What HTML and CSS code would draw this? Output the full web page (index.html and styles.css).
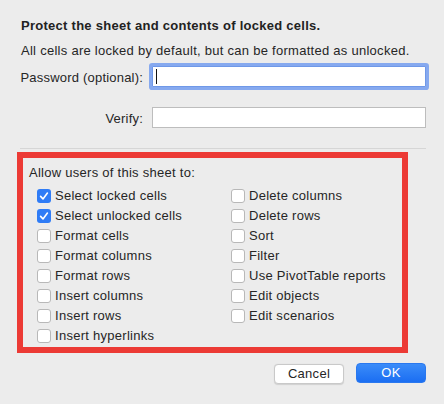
FILE: index.html
```html
<!DOCTYPE html>
<html>
<head>
<meta charset="utf-8">
<link rel="stylesheet" href="styles.css">
</head>
<body>
<div class="dialog">
  <div class="title">Protect the sheet and contents of locked cells.</div>
  <div class="desc">All cells are locked by default, but can be formatted as unlocked.</div>
  <div class="field field-password">
    <label class="field-label">Password (optional):</label>
    <div class="input input-focus"><span class="caret"></span></div>
  </div>
  <div class="field field-verify">
    <label class="field-label">Verify:</label>
    <div class="input"></div>
  </div>
  <div class="separator"></div>
  <div class="allow-box">
    <div class="allow-title">Allow users of this sheet to:</div>
    <div class="options">
      <div class="col">
        <div class="opt"><span class="cb checked"><svg viewBox="0 0 14 14" width="14" height="14"><path d="M3.6 7.4 L6 9.9 L10.4 4.1" fill="none" stroke="#fff" stroke-width="1.6" stroke-linecap="round" stroke-linejoin="round"/></svg></span><span>Select locked cells</span></div>
        <div class="opt"><span class="cb checked"><svg viewBox="0 0 14 14" width="14" height="14"><path d="M3.6 7.4 L6 9.9 L10.4 4.1" fill="none" stroke="#fff" stroke-width="1.6" stroke-linecap="round" stroke-linejoin="round"/></svg></span><span>Select unlocked cells</span></div>
        <div class="opt"><span class="cb"></span><span>Format cells</span></div>
        <div class="opt"><span class="cb"></span><span>Format columns</span></div>
        <div class="opt"><span class="cb"></span><span>Format rows</span></div>
        <div class="opt"><span class="cb"></span><span>Insert columns</span></div>
        <div class="opt"><span class="cb"></span><span>Insert rows</span></div>
        <div class="opt"><span class="cb"></span><span>Insert hyperlinks</span></div>
      </div>
      <div class="col">
        <div class="opt"><span class="cb"></span><span>Delete columns</span></div>
        <div class="opt"><span class="cb"></span><span>Delete rows</span></div>
        <div class="opt"><span class="cb"></span><span>Sort</span></div>
        <div class="opt"><span class="cb"></span><span>Filter</span></div>
        <div class="opt"><span class="cb"></span><span>Use PivotTable reports</span></div>
        <div class="opt"><span class="cb"></span><span>Edit objects</span></div>
        <div class="opt"><span class="cb"></span><span>Edit scenarios</span></div>
      </div>
    </div>
  </div>
  <div class="buttons">
    <button class="btn btn-cancel">Cancel</button>
    <button class="btn btn-ok">OK</button>
  </div>
</div>
</body>
</html>
```
FILE: styles.css
```css
html, body {
  margin: 0;
  padding: 0;
  background: #ececec;
}
body {
  width: 444px;
  height: 404px;
  overflow: hidden;
  font-family: "Liberation Sans", Arial, sans-serif;
  font-size: 13px;
  letter-spacing: 0.27px;
  color: #262626;
}
.dialog {
  padding: 17px 18px 0 21px;
}
.title {
  font-weight: bold;
  line-height: 17px;
  color: #222;
}
.desc {
  margin-top: 8px;
  line-height: 17px;
}
.field {
  display: flex;
  align-items: flex-start;
  height: 21px;
}
.field-password {
  margin-top: 7px;
}
.field-verify {
  margin-top: 20px;
}
.field-label {
  width: 122px;
  flex: none;
  display: flex;
  justify-content: flex-end;
  white-space: nowrap;
  letter-spacing: 0.2px;
  line-height: 21px;
  margin-top: 1px;
  margin-right: 9px;
}
.input {
  box-sizing: border-box;
  width: 274px;
  flex: none;
  height: 21px;
  background: #fff;
  border: 1px solid #bdbdbd;
  position: relative;
}
.input-focus {
  border-color: #6f98e8;
  box-shadow: 0 0 0 3px #86a9ef;
  border-radius: 1px;
}
.caret {
  position: absolute;
  left: 3px;
  top: 2px;
  width: 1px;
  height: 15px;
  background: #111;
}
.separator {
  margin-top: 20px;
  margin-left: -1px;
  width: 406px;
  height: 1px;
  background: #d6d6d6;
}
.allow-box {
  box-sizing: border-box;
  margin-top: 3px;
  margin-left: -4px;
  width: 391px;
  height: 201px;
  border: 6px solid #ec3a35;
  padding: 6px 0 0 6px;
}
.allow-title {
  line-height: 17px;
}
.options {
  display: flex;
  margin-top: 5px;
  padding-left: 8px;
}
.col {
  width: 194px;
  flex: none;
}
.opt {
  display: flex;
  align-items: center;
  height: 20px;
  line-height: 20px;
  white-space: nowrap;
}
.cb {
  box-sizing: border-box;
  width: 14px;
  height: 14px;
  border: 1px solid #b8b8b8;
  border-radius: 3px;
  background: #fff;
  margin-right: 4px;
  flex: none;
  display: flex;
}
.cb.checked {
  border: none;
  background: #2f7cf6;
}
.buttons {
  display: flex;
  justify-content: flex-end;
  align-items: flex-start;
  margin-top: 11px;
  gap: 12px;
}
.btn {
  box-sizing: border-box;
  width: 70px;
  height: 20px;
  font-family: "Liberation Sans", Arial, sans-serif;
  font-size: 13px;
  letter-spacing: 0.27px;
  border-radius: 4px;
  padding: 0;
  line-height: 18px;
}
.btn-cancel {
  background: #fff;
  color: #262626;
  border: 1px solid #c9c9c9;
  box-shadow: 0 0.5px 1px rgba(0,0,0,0.12);
}
.btn-ok {
  margin-top: -1px;
  background: linear-gradient(#3b8cf9, #1b6ef2);
  color: #fff;
  border: 1px solid #2a78ef;
}
```
